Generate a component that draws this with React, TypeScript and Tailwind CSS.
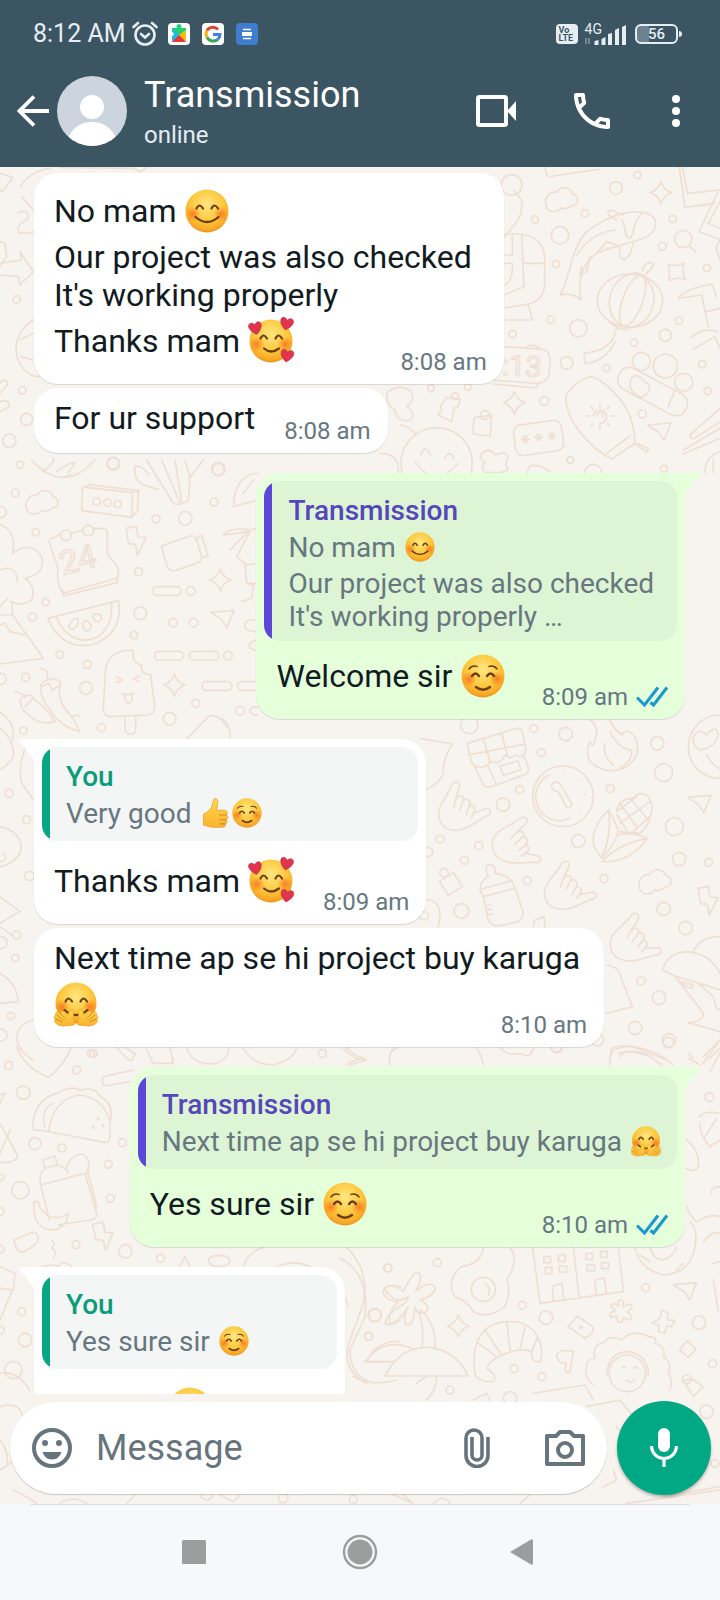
import { memo } from "react";
import type { ReactNode } from "react";
import { MdOutlinePhone } from "react-icons/md";

type EmojiKind = "blush" | "relaxed" | "hearts" | "hug" | "thumb";

type Line = {
  text: string;
  emojis?: EmojiKind[];
};

type Quote = {
  author: string;
  lines: Line[];
};

type Message = {
  id: number;
  outgoing?: boolean;
  first?: boolean;
  quote?: Quote;
  lines: Line[];
  time?: string;
};

const MESSAGES: Message[] = [
  {
    id: 1,
    lines: [
      { text: "No mam ", emojis: ["blush"] },
      { text: "Our project was also checked " },
      { text: "It's working properly " },
      { text: "Thanks mam ", emojis: ["hearts"] },
    ],
    time: "8:08 am",
  },
  { id: 2, lines: [{ text: "For ur support" }], time: "8:08 am" },
  {
    id: 3,
    outgoing: true,
    first: true,
    quote: {
      author: "Transmission",
      lines: [
        { text: "No mam ", emojis: ["blush"] },
        { text: "Our project was also checked " },
        { text: "It's working properly …" },
      ],
    },
    lines: [{ text: "Welcome sir ", emojis: ["relaxed"] }],
    time: "8:09 am",
  },
  {
    id: 4,
    first: true,
    quote: {
      author: "You",
      lines: [{ text: "Very good ", emojis: ["thumb", "relaxed"] }],
    },
    lines: [{ text: "Thanks mam ", emojis: ["hearts"] }],
    time: "8:09 am",
  },
  {
    id: 5,
    lines: [
      { text: "Next time ap se hi project buy karuga" },
      { text: "", emojis: ["hug"] },
    ],
    time: "8:10 am",
  },
  {
    id: 6,
    outgoing: true,
    first: true,
    quote: {
      author: "Transmission",
      lines: [{ text: "Next time ap se hi project buy karuga ", emojis: ["hug"] }],
    },
    lines: [{ text: "Yes sure sir ", emojis: ["relaxed"] }],
    time: "8:10 am",
  },
  {
    id: 7,
    first: true,
    quote: {
      author: "You",
      lines: [{ text: "Yes sure sir ", emojis: ["relaxed"] }],
    },
    lines: [{ text: "", emojis: ["relaxed"] }],
  },
];

const EMOJI_LABELS: Record<EmojiKind, string> = {
  blush: "smiling face with smiling eyes",
  relaxed: "smiling face",
  hearts: "smiling face with hearts",
  hug: "hugging face",
  thumb: "thumbs up",
};

const HEART = "M0 5C-7 0-6-5-3-5-1-5 0-3 0-3 0-3 1-5 3-5 6-5 7 0 0 5Z";

/* Shared gradients for the emoji faces */
const EmojiDefs = () => (
  <svg className="absolute h-0 w-0" aria-hidden="true">
    <defs>
      <radialGradient id="face" cx="0.5" cy="0.35" r="0.68">
        <stop offset="0" stopColor="#ffe682" />
        <stop offset="0.55" stopColor="#fdc93e" />
        <stop offset="0.85" stopColor="#f9a926" />
        <stop offset="1" stopColor="#e8881c" />
      </radialGradient>
      <radialGradient id="cheek">
        <stop offset="0" stopColor="#f4661b" stopOpacity="0.75" />
        <stop offset="1" stopColor="#f4661b" stopOpacity="0" />
      </radialGradient>
      <linearGradient id="hand" x1="0" y1="0" x2="0" y2="1">
        <stop offset="0" stopColor="#ffd84f" />
        <stop offset="1" stopColor="#f9b32c" />
      </linearGradient>
    </defs>
  </svg>
);

const Emoji = ({ kind, className }: { kind: EmojiKind; className: string }) => {
  if (kind === "thumb") {
    return (
      <svg viewBox="0 0 44 44" className={className} role="img" aria-label={EMOJI_LABELS[kind]}>
        <path
          d="M5 24C10 22 15 17 18 11 19 8 19 3 21 1c4-1 6 3 5 8l-2 9h12c5 0 5 6 2 7 4 1 3 6 0 7 3 2 1 6-1 6 1 3-1 5-4 5H20C13 43 9 40 5 40Z"
          fill="url(#hand)"
          stroke="#e59a22"
        />
        <path d="M39 25H29M39 32H29M37 38H29" stroke="#d98a1c" strokeWidth="1.6" fill="none" strokeLinecap="round" />
      </svg>
    );
  }
  const hugging = kind === "hug";
  return (
    <svg viewBox="0 0 44 44" className={`overflow-visible ${className}`} role="img" aria-label={EMOJI_LABELS[kind]}>
      <circle cx="22" cy={hugging ? 21 : 22} r={hugging ? 20.5 : 21.5} fill="url(#face)" />
      <circle cx="8" cy="25" r="7.5" fill="url(#cheek)" />
      <circle cx="36" cy="25" r="7.5" fill="url(#cheek)" />
      <g fill="none" stroke="#6b3f0c" strokeLinecap="round">
        {kind === "relaxed" ? (
          <>
            <path d="M11 22q3.5-5 7 0M26 22q3.5-5 7 0" strokeWidth="2.4" />
            <path d="M8 15q3-4 8-2.5M28 12.5q5-1.5 8 2.5" strokeWidth="1.5" />
            <path d="M15 33q7 5.500 14 0" strokeWidth="2.4" />
          </>
        ) : (
          <>
            <path d="M11.5 19.5q3-6 6.500 0M26.5 19.5q3-6 6.500 0" strokeWidth="2.2" />
            <path d={kind === "hearts" ? "M15 29.5q7 6 15 0" : "M10.5 28q11.500 10 23 0"} strokeWidth="2.2" />
          </>
        )}
      </g>
      {kind === "hearts" && (
        <g fill="#e2344c" stroke="#b81f3a" strokeWidth="0.5">
          <path d={HEART} transform="translate(6.5 9.5) rotate(-12) scale(1.2)" />
          <path d={HEART} transform="translate(37.5 5) rotate(12) scale(1.2)" />
          <path d={HEART} transform="translate(38 37) rotate(10) scale(1.2)" />
        </g>
      )}
      {hugging && (
        <>
          <g fill="url(#hand)" stroke="#eda02a" strokeWidth="0.8" strokeLinejoin="round">
            <path d="M20 43c1-3-2-7 0-14-1-3-4-2-5 1l-1 3-5-4c-2 0-3 1-2 3l-4-2c-2 1-2 2-1 3-2 1-2 2-1 4-1 2 0 6 8 7Z" />
            <path d="M24 43c-1-3 2-7 0-14 1-3 4-2 5 1l1 3 5-4c2 0 3 1 2 3l4-2c2 1 2 2 1 3 2 1 2 2 1 4 1 2 0 6-8 7Z" />
          </g>
          <path
            d="M7 32l4 4M3 33l6 5M2 37l6 3M37 32l-4 4M41 33l-6 5M42 37l-6 3"
            fill="none"
            stroke="#c97a18"
            strokeWidth="0.8"
            strokeLinecap="round"
          />
        </>
      )}
    </svg>
  );
};

const STAR = "M0-33Q7-8 33 0 8 8 0 33-8 8-33 0-8-8 0-33Z";
const CLOUD = "M-46 22C-56-4-35-24-14-21-4-42 30-36 32-16 56-10 52 20 30 18 20 28 6 30 0 24-8 40-40 42-46 22Z";
const PLANE = "M-35-18 35-24 14 28-2 4Z";
const BOLT = "M-28-40 4-46 8-14 32-12 6 40 0 8-20 6Z";
const FIST =
  "M-10-60C0-85 22-78 16-58L-2-20C10-40 28-34 22-18 38-26 46-10 38 2 54-2 58 12 48 24L88 16C104 20 100 36 86 38 60 44 30 72-10 68-56 64-66 20-48-10ZM-2-20-8 0M22-18 8 10M38 2 26 24M48 24 40 36";

type Dot = [number, number, number];

const Dots = ({ items }: { items: Dot[] }) => (
  <>
    {items.map(([x, y, r]) => (
      <circle key={`${x}-${y}`} cx={x} cy={y} r={r} />
    ))}
  </>
);

const Stamp = ({ d, x, y, turn = 0 }: { d: string; x: number; y: number; turn?: number }) => (
  <path d={d} transform={`translate(${x} ${y}) rotate(${turn})`} />
);

/* Line-drawn doodles behind the conversation */
const Wallpaper = memo(() => (
  <svg
    className="absolute inset-0 h-full w-full"
    viewBox="0 0 720 1600"
    preserveAspectRatio="xMidYMin slice"
    fill="none"
    stroke="#efdfd3"
    strokeWidth="5"
    strokeLinejoin="round"
    strokeLinecap="round"
    aria-hidden="true"
  >
    {/* top left */}
    <g transform="translate(0 160) scale(0.3333)">
      <Dots
        items={[
          [50, 418, 11], [67, 691, 11], [80, 778, 18], [28, 842, 20], [340, 910, 18], [655, 928, 18], [60, 914, 11],
        ]}
      />
      <path d="M0 40 38 52 8 95 0 90M60 80C80 50 110 30 150 25M65 110 100 150M55 160C80 145 90 165 80 180 60 190 45 205 60 220 75 210 90 230 100 215M0 245 15 250 20 290 0 320M0 310 65 300 60 275 100 335 60 375 55 350 0 345" />
      <path d="M100 480C50 510 35 570 60 610 75 640 100 650 120 650M60 540 100 520M62 590 100 600M0 700 22 675Q25 660 10 660L0 668M0 755 28 740Q30 728 15 722L0 725M180 22 400 25 420 35 440 22" />
    </g>

    {/* top right */}
    <g transform="translate(380 160) scale(0.3333)">
      <Dots
        items={[
          [772, 45, 11], [708, 84, 19], [615, 160, 11], [465, 178, 11], [540, 226, 26], [878, 177, 11],
          [910, 237, 26], [847, 259, 12], [527, 312, 11], [981, 324, 11], [512, 479, 11], [398, 522, 11],
          [595, 505, 26], [762, 548, 11], [856, 526, 18], [897, 482, 11], [560, 609, 19], [680, 624, 11],
          [784, 604, 27], [856, 618, 36], [911, 667, 27], [967, 613, 11], [983, 693, 11], [493, 723, 13],
          [787, 762, 12], [153, 685, 10], [263, 681, 10], [571, 900, 10], [640, 938, 25], [852, 926, 10],
          [395, 75, 31], [225, 708, 10], [314, 765, 13],
        ]}
      />
      <Stamp d={STAR} x={843} y={98} />
      <Stamp d={STAR} x={403} y={728} />
      <Stamp d={CLOUD} x={545} y={118} />
      <Stamp d={PLANE} x={838} y={813} />
      <path d="M928 258 946 275M495 22 500 45Q505 52 520 48L655 28M865 312Q888 322 912 310 905 335 915 358 890 350 866 362 872 335 865 312ZM370 235C395 200 432 180 425 120L400 90" />
      <path d="M540 405C570 360 570 270 620 215 680 170 740 150 790 157 840 165 840 215 790 235 740 255 690 260 650 280 610 310 590 350 603 420 580 400 560 400 540 405ZM730 165C715 160 695 145 684 155 680 168 700 175 710 180M720 262C715 290 725 300 735 298 755 285 755 265 760 250M725 180C740 200 730 230 750 235 765 220 755 190 785 160M590 285C620 240 660 215 705 210M605 320 600 345 620 335 630 290M650 280 680 245 710 255" />
      <ellipse cx="750" cy="422" rx="98" ry="80" />
      <ellipse cx="755" cy="422" rx="66" ry="80" transform="rotate(14 755 422)" />
      <ellipse cx="758" cy="422" rx="30" ry="80" transform="rotate(20 758 422)" />
      <path d="M755 342Q780 332 805 362M787 333C790 310 815 298 820 315 820 328 802 330 797 346M692 488Q715 512 745 508M710 508 700 535C670 580 630 575 612 580L615 612C660 605 690 580 705 545" />
      <path d="M370 222H420Q490 230 494 290V375Q490 430 430 435L370 444M432 310H494M397 222V285H370M425 225 432 380 370 406M370 310H397Q400 370 370 376M445 435 458 480H370" />
      <path d="M440 560Q460 548 480 566M370 560 490 568Q515 580 510 610L505 650Q495 672 470 670L330 660M340 672 470 684 475 672" />
      <text x="365" y="645" fontSize="86" strokeWidth="4" fontFamily="Roboto, sans-serif" transform="rotate(3 365 645)">
        :13
      </text>
      <path d="M625 652C600 660 560 690 557 715 560 790 640 870 695 897L765 850C765 760 720 700 650 655Q635 648 625 652ZM680 880 750 828M765 850 800 876 806 866 775 852M640 768A20 20 0 1 1 660 790M652 768A9 9 0 1 1 668 772M660 730V742M660 795V808M618 768H630M692 768H704M630 738 640 748M690 798 682 790M690 738 682 746M632 798 640 790" />
      <rect x="705" y="660" width="226" height="70" rx="32" transform="rotate(28 818 695)" />
      <path d="M755 655C740 680 755 700 785 712 815 700 815 670 795 668 780 640 760 645 755 655ZM885 690 865 740" />
      <rect x="403" y="788" width="145" height="92" rx="22" transform="rotate(-8 475 833)" />
      <path d="M424 838H448M430 828 442 848M442 828 430 848M464 832H488M470 822 482 842M482 822 470 842M504 827H528M510 817 522 837M522 817 510 837" />
      <circle cx="170" cy="910" r="107" />
      <path d="M122 885Q135 850 152 885M194 895Q208 865 223 898M105 905Q165 990 235 910M0 880Q60 880 55 940M60 795Q90 800 105 820M20 700Q50 670 90 690 110 720 80 740 110 760 90 780 50 790 45 750 20 740 20 700Z" />
      <path d="M180 740 200 712 240 718 235 740 222 745 215 785 195 775 175 765 185 745ZM283 772 335 767 330 828 278 822ZM305 880Q330 860 345 885 380 870 385 895 370 910 385 930L360 938H315Q300 920 315 905 295 900 305 880ZM440 938 450 918Q480 910 510 935" />
      <path d="M898 22 915 142 1005 130M908 22 922 100 1020 90M1012 100 957 215 1020 238M1020 125 985 190 1020 205M1020 240 1008 262 1020 300M895 415C920 385 960 380 995 372L1010 410M895 415 965 405 985 500M980 455 1020 445M930 535Q970 500 1010 515M940 568 1005 530 1020 565M1020 745 930 825Q930 838 945 835L1020 785M910 870 1020 805M910 882 1020 835M975 938Q975 890 1020 875M1000 938V900" />
    </g>

    {/* left, beside the first reply */}
    <g transform="translate(0 460) scale(0.3333)">
      <Dots
        items={[
          [340, 12, 19], [655, 27, 20], [46, 99, 12], [642, 126, 12], [468, 177, 12], [556, 175, 20],
          [107, 217, 11], [416, 335, 12], [572, 393, 13], [137, 426, 11], [97, 471, 12], [421, 460, 19],
          [519, 488, 13], [581, 488, 13], [402, 525, 11], [179, 584, 11], [262, 613, 12], [684, 587, 13],
          [77, 652, 12], [258, 684, 19], [587, 730, 12], [720, 752, 13], [509, 776, 19], [304, 803, 12],
          [70, 812, 11], [290, 125, 11], [322, 128, 11], [353, 132, 11], [2, 156, 17], [2, 657, 17], [265, 212, 16], [198, 226, 16],
        ]}
      />
      <Stamp d={CLOUD} x={126} y={126} />
      <Stamp d={STAR} x={661} y={360} />
      <Stamp d={STAR} x={523} y={675} />
      <Stamp d={PLANE} x={667} y={475} />
      <Stamp d={BOLT} x={406} y={245} />
      <path d="M247 88Q248 80 258 82L398 98 395 172 245 152ZM250 85 268 74 415 92 413 152 395 172M398 98 415 92M95 0Q190 105 285 0M125 25Q170 65 215 45M130 35Q170 0 160-5M170 35Q200 10 225 8L205 40" />
      <path d="M405 20Q400 60 430 75L475 88M405 20Q430 15 445 45M440 0 520 130Q535 138 565 122L570 50 555 0M485 0 540 130M525 0 545 125M610 0 568 55M700 140C700 80 730 40 775 40M700 140 775 120M730 100 760 60" />
      <path d="M150 238 182 222M214 220 250 210M282 206 310 205Q322 205 322 220L322 280Q325 290 350 315 360 340 352 355L190 400Q175 385 172 345 178 320 165 300L148 245M352 355V368L190 408V390" />
      <text x="188" y="345" fontSize="98" strokeWidth="4" fontFamily="Roboto, sans-serif" transform="rotate(-14 188 345)">
        24
      </text>
      <path d="M485 258 570 228Q585 224 590 240L605 290Q605 305 590 310L525 332Q505 335 500 315ZM585 240 605 225 625 290 605 290M0 195Q50 210 38 280 90 240 125 290 140 340 75 355 110 380 95 420 70 440 30 425M0 330Q50 310 52 365M0 440 25 412M35 425 38 465M0 465H38L130 595 0 612M0 495 15 490 30 515 75 525" />
      <path d="M143 475 355 422Q372 510 290 550 190 580 143 475ZM168 470Q210 560 285 535 340 505 335 430M205 500Q225 465 235 480 235 505 215 508ZM248 490Q260 470 275 500 265 520 252 508ZM278 465Q300 455 305 475 295 492 282 480Z" />
      <rect x="457" y="380" width="86" height="26" rx="13" />
      <rect x="463" y="574" width="88" height="26" rx="13" />
      <rect x="568" y="574" width="88" height="26" rx="13" />
      <rect x="606" y="665" width="90" height="26" rx="13" />
      <rect x="712" y="665" width="90" height="26" rx="13" />
      <path d="M775 480H750Q732 485 734 502 740 515 775 515M775 538Q745 545 748 560 755 572 775 572M775 740Q750 740 750 753 755 766 775 766M670 225Q690 200 750 210L770 205M670 225 745 215 690 270M750 215 710 290 740 315 775 310M735 315 740 370 760 375 755 415 725 425M740 370H775" />
      <path d="M400 572Q360 568 335 590 315 610 315 650L310 750Q312 768 330 770L445 765Q465 760 464 740L452 645Q420 640 425 615 395 610 400 572ZM375 770V810Q380 823 392 823 405 823 407 810V770M348 650 368 660 350 668M418 648 400 658 418 664M365 700Q385 708 402 700M372 705Q375 728 388 730 398 725 397 705" />
      <path d="M45 695Q70 700 75 712M62 730Q55 715 75 708 95 700 100 715 140 745 165 785 120 800 80 760 65 750 62 730ZM75 740 100 715M120 625Q145 625 143 655M122 690Q120 660 150 658 180 655 182 672 165 720 215 770L240 815Q180 800 150 750 125 720 122 690ZM125 680 145 670 158 690 180 675M215 770Q235 760 237 770M0 757Q50 790 38 840M560 838 625 770Q640 760 660 775L690 810V838M660 775Q680 780 685 800" />
    </g>

    {/* right of the second exchange */}
    <g transform="translate(420 720) scale(0.3333)">
      <Dots
        items={[
          [341, 26, 12], [437, 42, 20], [364, 98, 12], [712, 70, 20], [731, 158, 27], [299, 209, 12],
          [571, 206, 12], [249, 254, 20], [763, 320, 27], [475, 363, 20], [60, 357, 12], [176, 377, 12],
          [777, 417, 20], [866, 427, 12], [133, 421, 12], [322, 482, 12], [552, 476, 12], [731, 567, 20],
          [797, 624, 20], [124, 573, 22], [663, 783, 12], [717, 833, 20], [646, 924, 20], [747, 961, 20],
          [532, 960, 18], [410, 980, 18], [72, 458, 13], [12, 587, 13], [24, 396, 14], [429, 229, 91], [900, 80, 95], [148, 15, 26],
        ]}
      />
      <Stamp d={CLOUD} x={705} y={484} turn={-3} />
      <Stamp d={PLANE} x={838} y={250} />
      <Stamp d={BOLT} x={862} y={545} />
      <Stamp d={FIST} x={110} y={262} turn={-8} />
      <Stamp d={FIST} x={280} y={360} turn={22} />
      <Stamp d={FIST} x={430} y={500} />
      <Stamp d={FIST} x={630} y={655} turn={8} />
      <path d="M142 70 290 25Q303 22 308 38L318 90Q310 118 285 105 270 120 255 105 245 135 210 125 200 145 175 140 155 140 152 115ZM190 55 210 125M245 40 262 105M145 105 315 72M165 142 190 195Q200 205 215 200L320 162Q328 155 325 140L310 105M240 138 295 122 302 150 250 166ZM205 140 230 195" />
      <path d="M388 165A72 72 0 1 0 450 295M395 195Q405 180 420 190L455 250Q455 268 440 262L415 215Q395 215 395 195ZM435 158V160M475 180V182M495 222V224M480 270V272" />
      <path d="M510 0Q540 20 525 60 520 90 510 65 495 90 510 125 560 170 620 140 670 105 645 50 620 20 605 45 575 20 570 0M555 70Q545 105 580 135M570 35Q600 90 635 90 640 120 600 145M0 55 98 72Q70 110 70 160 55 200 0 215" />
      <path d="M590 270Q600 235 640 235 660 210 685 230 705 260 690 290 685 320 660 340L600 335M600 250 650 320M630 235 685 300M590 285 620 330M690 245 600 310M650 230 590 275M695 285 640 335M567 270Q510 320 522 380L545 415Q590 370 595 330ZM567 270Q575 350 545 415M595 345Q640 335 682 355 630 430 545 425M550 420Q600 370 682 355" />
      <path d="M180 510Q180 480 205 470 190 440 208 433 228 435 225 460 270 465 280 495L285 505 190 530ZM183 508 278 480M190 530 205 600Q215 618 235 618L295 605Q312 595 308 570L285 505M195 555H210M198 570 215 568M202 585 218 582M340 620 345 600 372 590 375 620M58 485 100 458 128 500 85 526ZM0 540Q60 530 60 590L55 620M560 735Q600 740 605 780L638 860 560 880" />
      <path d="M728 750Q740 700 800 695 870 700 900 760M728 750 765 768 850 880Q850 905 805 908L900 935M765 768 900 810M785 785 820 795 815 805 790 795ZM820 695Q840 650 900 650M835 790 880 830 890 865 900 870M570 1020 575 985Q610 970 650 985L740 1020M595 1000Q650 985 690 1010M850 1010 900 960M870 1015 900 985M805 1000 820 1015M820 50Q840 20 860 45 890 10 895 45 890 80 840 90 815 75 820 50ZM860 105Q880 140 900 145" />
    </g>

    {/* left margin */}
    <g transform="translate(0 720) scale(0.3333)">
      <Dots
        items={[
          [27, 220, 12], [80, 299, 12], [88, 468, 14], [50, 645, 12], [46, 714, 11], [3, 668, 18],
          [33, 888, 11], [3, 945, 18], [273, 1000, 11],
        ]}
      />
      <path d="M0 25Q45 60 40 110 20 140 0 150M90 60Q50 120 65 190L100 240M0 320Q50 330 62 370 70 410 20 435L0 440M10 400Q30 420 0 425M0 530 60 575 0 610M0 620 40 650M0 760Q50 790 55 845L0 850M100 900Q50 910 50 960 60 1000 100 1020" />
    </g>

    {/* left, below */}
    <g transform="translate(0 1040) scale(0.3333)">
      <Dots
        items={[
          [280, 41, 11], [26, 77, 12], [230, 90, 12], [967, 41, 12], [70, 158, 20], [105, 311, 18], [367, 308, 12],
          [186, 324, 12], [325, 373, 12], [61, 451, 26], [331, 475, 12], [228, 614, 12], [376, 634, 20],
          [482, 655, 12], [65, 815, 12], [75, 900, 20], [40, 990, 26], [1163, 684, 12], [1125, 826, 19],
          [1106, 889, 12], [0, 628, 12], [0, 870, 12], [0, 515, 12], [2, 412, 10],
        ]}
      />
      <path d="M50 20Q70 80 145 112 190 80 215 20M350 22Q380 60 395 62L405 40 370 20M440 30 460 70H520L510 20M310 110 400 90M310 110Q300 125 315 138L390 125M560 25Q580 80 650 70 690 50 685 25M730 25Q760 75 820 75 880 60 890 25M1030 25Q1060 60 1100 60L1050 75" />
      <path d="M98 262Q100 180 170 160 215 135 240 150 290 140 295 165 345 190 330 245L330 290Q330 308 315 307L120 270Q98 275 98 262ZM145 275Q160 180 235 165 310 170 330 245M135 260Q120 210 160 190M0 165 15 160 0 190M0 250 52 345Q50 370 0 368M0 340 30 270" />
      <path d="M280 262V264M295 235V237M310 255V257" strokeWidth="9" />
      <path d="M128 360 165 348 172 375 135 385ZM135 385Q115 400 122 435L148 540M172 375Q200 385 205 400M122 435 255 400 290 520Q290 540 270 540L175 555M200 385Q210 345 245 342 275 350 262 400M262 390 290 500M102 485Q95 570 165 570 200 560 205 520 170 545 135 520 115 500 115 485ZM42 600 95 578Q112 575 115 595 115 615 70 635 50 640 42 600ZM155 602Q170 610 155 625 175 635 160 655" />
      <Stamp d={BOLT} x={308} y={592} turn={-4} />
      <path d="M125 680Q160 670 175 680 185 655 215 680M540 680 555 650 570 680M625 660Q630 645 655 647 690 645 690 665 685 680 655 680 630 680 625 660ZM0 680 45 700 40 750 0 745M35 755 0 840M730 680Q740 640 790 622M1040 622Q1110 690 1090 790 1070 850 1050 900 1020 990 1100 1030M830 680Q900 650 960 700 1030 740 1045 800M1200 740Q1150 730 1150 760 1160 785 1195 785 1160 820 1170 850 1185 855 1200 840M1100 965Q1130 900 1200 905M1100 965H1150M0 1000Q50 990 90 1050" />
    </g>

    {/* right, below */}
    <g transform="translate(340 1040) scale(0.3333)">
      <Dots
        items={[
          [144, 684, 12], [292, 668, 12], [917, 743, 12], [547, 796, 12], [618, 833, 20], [104, 825, 20],
          [1077, 848, 20], [86, 889, 12], [522, 986, 12], [606, 1010, 12], [330, 1050, 12], [1118, 971, 12],
          [430, 748, 36], [862, 1000, 55], [510, 1075, 20], [1040, 1018, 13], [1108, 171, 13], [723, 862, 4], [650, 20, 16], [985, 8, 16],
        ]}
      />
      <Stamp d={STAR} x={355} y={858} />
      <Stamp d={PLANE} x={1035} y={752} />
      <path d="M430 622Q425 670 365 680 315 720 345 770 385 785 400 815 440 840 495 800 515 750 500 720 540 660 510 622M435 730Q455 745 445 765M578 622 600 790 850 755 835 622M700 622 718 775M640 780 637 738 665 730 672 775M768 765 765 720 792 714 800 760" />
      <path d="M612 650H632V668H612ZM655 645H676V664H655ZM616 682H636V702H616ZM658 678H680V696H658ZM738 640H758V658H738ZM782 634H802V652H782ZM742 674H764V692H742ZM785 668H806V686H785Z" />
      <path d="M205 770Q175 790 155 770 120 745 145 738 170 735 190 755 220 690 238 700 250 715 225 755 270 720 285 740 290 765 240 780 275 800 260 815 230 830 225 800 220 870 195 850 190 820 205 800 160 870 135 850 140 820 195 790ZM235 815Q255 870 245 925M240 810Q290 850 285 925M135 1008Q180 920 265 922 350 930 385 1008ZM75 965Q130 890 215 925M75 965H165M260 1080Q290 1050 290 1010M230 1030 260 1008M40 1010Q100 1040 170 1020M0 655Q90 700 75 830L30 930Q30 1010 100 1030" />
      <path d="M405 1000Q395 930 420 890 440 850 500 845 560 840 590 885 615 930 600 965 575 970 575 935 540 920 485 945 450 960 440 985 475 1010 460 1025 410 1025 405 1000ZM415 910 470 950M435 870 485 945M500 845 510 930M555 860 540 928M592 895 575 935" />
      <path d="M650 945Q660 925 700 935L690 995Q680 1005 675 985L680 970Q650 970 650 945ZM685 860 712 828 758 860Q765 880 735 895ZM835 782Q845 775 850 788L850 800 868 792Q880 795 874 806L862 815 875 828Q876 840 864 840L850 832 845 846Q834 850 832 840L832 828 815 832Q806 828 812 818L826 812 814 800Q814 788 826 792L836 798ZM935 850 960 835 965 810 985 820 982 840 1005 842 995 860 980 858 975 880 955 875 958 855ZM1018 930 1042 902 1068 928 1045 952ZM1030 1020 1058 1018 1090 1040 1060 1070Z" />
      <path d="M760 1035Q730 1010 740 980 735 960 765 955 755 910 790 910 810 880 845 900 880 865 925 890 955 890 945 910 980 920 970 950 1000 970 985 1000 1000 1020 990 1050M800 1005Q805 935 865 935 925 945 925 1005M845 985Q850 975 858 985M880 985Q887 978 893 985M858 1020Q875 1035 885 1018M1080 230Q1090 210 1140 220M1080 250Q1080 290 1110 320L1140 300M1095 290 1130 235M1040 300Q1080 330 1075 380 1060 400 1040 385M1115 460Q1110 440 1140 440M1040 500Q1050 530 1070 545 1110 520 1140 530M885 622Q900 690 970 705 1060 700 1068 600 1070 565 1050 545M930 622Q940 660 970 660 1000 650 1010 622M900 645 930 665M1010 690 1030 670M1090 605Q1120 570 1140 580M1120 670 1140 665M1120 720 1135 815M580 1060 735 1035 760 1080M400 1080 440 1060 450 1080M810 75Q800 15 880 20 950 30 1000 75M840 50Q850 20 930 50L965 75M1045 55 1080 75M1140 0 1090 70M1140 40 1110 95M150 75Q140 30 175 22M410 22Q425 50 430 75M480 22Q500 50 540 40 570 60 580 25M20 22Q40 50 75 55 35 60 20 75" />
    </g>

    {/* around the composer */}
    <g transform="translate(0 1380) scale(0.3333)">
      <path d="M0 80Q70 60 70 130M0 270 60 230M40 330 70 345 110 370M0 180Q30 220 20 260M180 370Q220 345 260 370M380 370 410 340M600 345Q620 375 640 345M660 345 700 365 720 345M1180 345 1240 370 1210 345M1300 370Q1330 340 1350 370M1560 370 1590 345M1840 270 1850 300 1810 320M1880 370 2160 330M1990 350 2160 320M1760 80 1860 60 1900 110M1850 140 1890 190" />
      <Dots items={[[2120, 95, 20], [850, 355, 14], [1060, 358, 12], [2145, 250, 12]]} />
    </g>
  </svg>
));

Wallpaper.displayName = "Wallpaper";

const StatusBar = () => (
  <div className="flex h-[58px] items-center justify-between pt-[10px] pr-[38px] pl-[33px] text-[#e6eef3]">
    <div className="flex items-center">
      <span className="text-[25px] leading-7">8:12 AM</span>
      <svg
        viewBox="0 0 26 26"
        className="ml-[6px] h-[26px] w-[26px]"
        fill="none"
        stroke="currentColor"
        strokeWidth="2.6"
        strokeLinecap="round"
        aria-hidden="true"
      >
        <circle cx="13" cy="14" r="9.5" />
        <path d="M9 13l4 3.5 4-3.5M1.5 6 6 2M24.5 6 20 2" />
      </svg>
      <div className="ml-[10px] flex gap-3">
        <svg viewBox="0 0 22 22" className="h-[22px] w-[22px]" aria-hidden="true">
          <rect width="22" height="22" rx="4" fill="#fff" />
          <path d="M4 5h5a2.5 2.5 0 1 1 4 0h5v12H4v-4a2 2 0 1 0 0-4Z" fill="#22d07a" />
          <path d="M4 6 11 12 4 19v-6a2 2 0 1 0 0-4Z" fill="#1fb6f0" />
          <path d="M18 7v12l-7-7Z" fill="#fbbc0b" />
          <path d="M4 19 11 12l7 7Z" fill="#e93636" />
        </svg>
        <svg viewBox="0 0 22 22" className="h-[22px] w-[22px]" fill="none" strokeWidth="3" aria-hidden="true">
          <rect width="22" height="22" rx="4" fill="#fff" />
          <path d="M16 6.5A7 7 0 0 0 5 7.5" stroke="#d9473c" />
          <path d="M5 7.5A7 7 0 0 0 5 14.5" stroke="#efb412" />
          <path d="M5 14.5A7 7 0 0 0 15.5 16.5" stroke="#35a455" />
          <path d="M11 11.5H18Q18 14.5 15.5 16.5" stroke="#4580e8" />
        </svg>
        <svg viewBox="0 0 22 22" className="h-[22px] w-[22px]" aria-hidden="true">
          <rect width="22" height="22" rx="4" fill="#3f7dd0" />
          <path d="M7 6.5h8M7 15.5h8" stroke="#fff" strokeWidth="1.6" />
          <path d="M6 11h10" stroke="#fff" strokeWidth="4" />
        </svg>
      </div>
    </div>
    <div className="flex items-center">
      <span className="flex h-5 w-[22px] flex-col justify-center rounded bg-[#e6eef3] pl-[3px] text-[9px] leading-[8px] font-bold text-[#3b5563]">
        <span>Vo</span>
        <span>LTE</span>
      </span>
      <span className="ml-[7px] self-start text-sm leading-3">4G</span>
      <svg viewBox="0 0 42 22" className="-ml-[18px] h-[22px] w-[42px]" aria-hidden="true">
        <path d="M2 21v-6M5 15v6" stroke="#8299a5" strokeWidth="1.5" />
        <path
          d="M10.5 22v-4l4-1v5ZM17.5 22v-6l4-2v8ZM24 22V11l4-1v12ZM31 22V7l4-2v17ZM38 22V4l4-2v20Z"
          fill="currentColor"
        />
      </svg>
      <span className="ml-[9px] flex h-5 w-[43px] items-center justify-center rounded-md border-2 border-current bg-linear-to-r from-[#6d828e] from-30% to-transparent to-30% text-[15px] leading-4 font-medium">
        56
      </span>
      <span className="ml-px h-[6px] w-[3px] rounded-r-sm bg-current" />
    </div>
  </div>
);

const ChatHeader = () => (
  <header className="relative shrink-0 bg-[#3b5563] pb-[3px] text-white">
    <StatusBar />
    <div className="flex h-[106px] items-center pr-8 pl-[17px]">
      <button type="button" aria-label="Back" className="shrink-0">
        <svg viewBox="0 0 32 32" className="h-8 w-8" fill="none" stroke="currentColor" strokeWidth="3.8">
          <path d="M32 16H3M17 1.5 2.5 16 17 30.5" />
        </svg>
      </button>
      <svg
        viewBox="0 0 70 70"
        className="ml-2 h-[70px] w-[70px] shrink-0 rounded-full bg-[#ccd5de]"
        fill="#fff"
        role="img"
        aria-label="Contact photo"
      >
        <circle cx="35" cy="31" r="12" />
        <path d="M10 64C16 50 25 46 35 46s19 4 25 18L50 70H20Z" />
      </svg>
      <div className="ml-[17px] flex min-w-0 flex-1 flex-col gap-[5px]">
        <h1 className="truncate text-4xl leading-[42px]">Transmission</h1>
        <p className="text-2xl leading-7 text-[#e4edf2]">online</p>
      </div>
      <div className="flex items-center gap-12">
        <button type="button" aria-label="Video call">
          <svg viewBox="0 0 48 48" className="h-12 w-12" fill="none" stroke="currentColor" strokeWidth="4">
            <rect x="6" y="10" width="28" height="28" rx="1.5" />
            <path d="M35 24 44 14v20Z" fill="currentColor" stroke="none" />
          </svg>
        </button>
        <button type="button" aria-label="Voice call">
          <MdOutlinePhone className="h-12 w-12" />
        </button>
        <button type="button" aria-label="More options">
          <svg viewBox="0 0 24 32" className="h-8 w-6" fill="currentColor">
            <circle cx="12" cy="4" r="4" />
            <circle cx="12" cy="16" r="4" />
            <circle cx="12" cy="28" r="4" />
          </svg>
        </button>
      </div>
    </div>
  </header>
);

const QuoteBox = ({ quote, outgoing }: { quote: Quote; outgoing?: boolean }) => (
  <div className={`mx-2 flex overflow-hidden rounded-2xl ${outgoing ? "bg-[#ddf5d4]" : "bg-[#f4f6f6]"}`}>
    <div className={`w-2 shrink-0 ${outgoing ? "bg-[#5c47d9]" : "bg-[#06a884]"}`} />
    <div className="pt-[13px] pr-4 pb-2 pl-4 text-[28px] leading-[33px] whitespace-pre text-[#667781]">
      <p className={`font-medium ${outgoing ? "text-[#5546bb]" : "text-[#0b9c7c]"}`}>{quote.author}</p>
      {quote.lines.map((line) => (
        <p key={line.text} className={line.emojis ? "flex h-10 items-center gap-[2px]" : ""}>
          {line.text}
          {line.emojis?.map((kind) => (
            <Emoji key={kind} kind={kind} className="h-[30px] w-[30px]" />
          ))}
        </p>
      ))}
    </div>
  </div>
);

const Ticks = () => (
  <svg viewBox="0 0 32 22" className="h-[22px] w-8" fill="none" stroke="#1b97cf" strokeWidth="3" role="img" aria-label="Read">
    <path d="M1 11.5 8.5 19 22 1.5M14.5 16.5 17.5 19 31 1.5" />
  </svg>
);

const MessageLine = ({ line, children }: { line: Line; children?: ReactNode }) => (
  <div className="flex items-end">
    <p className={line.emojis ? "flex h-[54px] items-center gap-px" : "pr-[7px]"}>
      {line.text}
      {line.emojis?.map((kind) => (
        <Emoji key={kind} kind={kind} className="h-11 w-11" />
      ))}
    </p>
    {children}
  </div>
);

const Bubble = ({ message }: { message: Message }) => {
  const { outgoing, first, quote, lines, time } = message;
  const quoteGap = outgoing ? "pt-2" : "pt-[13px]";
  const corner = outgoing ? "rounded-tr-none" : "rounded-tl-none";

  return (
    <li
      className={`relative w-fit rounded-3xl pb-4 shadow-[0_1px_1px_rgba(11,20,26,0.12)] ${
        outgoing ? "self-end bg-[#e5ffdb]" : "bg-white"
      } ${first ? `mt-5 pt-2 ${corner}` : "mt-1 pt-[11px]"} ${time ? "" : "min-w-[311px]"}`}
    >
      {first && (
        <svg
          viewBox="0 0 16 21"
          className={`absolute top-0 h-[21px] w-4 ${outgoing ? "left-full" : "right-full -scale-x-100"}`}
          fill={outgoing ? "#e5ffdb" : "#fff"}
          aria-hidden="true"
        >
          <path d="M0 0H13Q16 0 14 3L0 21Z" />
        </svg>
      )}
      {quote && <QuoteBox quote={quote} outgoing={outgoing} />}
      <div
        className={`pr-[17px] text-[32px] leading-[38px] whitespace-pre text-[#111b21] ${
          time ? "pl-5" : "pl-[134px]"
        } ${quote ? quoteGap : ""}`}
      >
        {lines.map((line, index) => (
          <MessageLine key={line.text} line={line}>
            {time && index === lines.length - 1 && (
              <span className="-mb-2 ml-auto flex items-center gap-2 pl-[22px] text-2xl leading-7 text-[#667781]">
                <time className={line.emojis ? "pl-2" : ""}>{time}</time>
                {outgoing && <Ticks />}
              </span>
            )}
          </MessageLine>
        ))}
      </div>
    </li>
  );
};

const Composer = () => (
  <form className="relative flex shrink-0 items-center gap-[10px] pt-[7px] pr-[9px] pb-[9px] pl-[10px]">
    <div className="flex h-[92px] min-w-0 flex-1 items-center rounded-full bg-white px-[22px] text-[#65747d] shadow-[0_1px_1px_rgba(11,20,26,0.2)]">
      <button type="button" aria-label="Emoji" className="shrink-0">
        <svg viewBox="0 0 40 40" className="h-10 w-10">
          <circle cx="20" cy="20" r="18" fill="none" stroke="currentColor" strokeWidth="4" />
          <circle cx="13" cy="15" r="3" fill="currentColor" />
          <circle cx="27" cy="15" r="3" fill="currentColor" />
          <path d="M10.5 24h19Q27 31.5 20 31.5T10.5 24Z" fill="currentColor" />
        </svg>
      </button>
      <input
        type="text"
        aria-label="Message"
        placeholder="Message"
        className="ml-6 h-16 min-w-0 flex-1 bg-transparent text-4xl text-[#111b21] outline-none placeholder:text-[#65747d]"
      />
      <button type="button" aria-label="Attach" className="shrink-0">
        <svg viewBox="0 0 26 40" className="h-10 w-[26px]" fill="none" stroke="currentColor" strokeWidth="3.6">
          <path d="M24 9v18.5a11 11 0 0 1-22 0V10a8 8 0 0 1 16 0v17a5 5 0 0 1-10 0V9" />
        </svg>
      </button>
      <button type="button" aria-label="Camera" className="ml-[55px] shrink-0">
        <svg
          viewBox="0 0 40 40"
          className="h-10 w-10"
          fill="none"
          stroke="currentColor"
          strokeWidth="4"
          strokeLinejoin="round"
        >
          <path d="M2 8h9l4-4h10l4 4h9v28H2Z" />
          <circle cx="20" cy="22" r="7" />
        </svg>
      </button>
    </div>
    <button
      type="button"
      aria-label="Record voice message"
      className="flex h-[94px] w-[94px] shrink-0 items-center justify-center rounded-full bg-[#02a884] text-white shadow-[0_2px_3px_rgba(11,20,26,0.3)]"
    >
      <svg viewBox="0 0 28 40" className="h-10 w-7" fill="none" stroke="currentColor" strokeWidth="3.2">
        <rect x="8" y="0" width="12" height="24" rx="6" fill="currentColor" stroke="none" />
        <path d="M1.6 18a12.400 12.400 0 0 0 24.800 0M14 30.5v8.500" />
      </svg>
    </button>
  </form>
);

const NavigationBar = () => (
  <nav className="relative h-24 shrink-0 bg-[#f7f8fa] text-[#9c9d9d]" aria-label="System">
    <div className="mx-[30px] h-[6px] border-t border-b border-t-[#dcdee0] border-b-white" />
    <div className="flex h-[84px] items-center justify-center gap-[134px]">
      <button type="button" aria-label="Recent apps">
        <svg viewBox="0 0 28 36" className="h-9 w-7" fill="currentColor">
          <rect x="2" y="6" width="24" height="24" rx="1.5" />
        </svg>
      </button>
      <button type="button" aria-label="Home">
        <svg viewBox="0 0 36 36" className="h-9 w-9">
          <circle cx="18" cy="18" r="16" fill="none" stroke="currentColor" strokeWidth="2.4" />
          <circle cx="18" cy="18" r="12.5" fill="currentColor" />
        </svg>
      </button>
      <button type="button" aria-label="Back">
        <svg viewBox="2 0 28 36" className="h-9 w-7 overflow-visible" fill="currentColor">
          <path d="M0 18 21 5.500Q23 4.500 23 7v22q0 2.500-2 1.500Z" />
        </svg>
      </button>
    </div>
  </nav>
);

export default function App() {
  return (
    <div className="relative flex h-screen flex-col overflow-hidden bg-[#f7f3ee] font-['Roboto',sans-serif]">
      <EmojiDefs />
      <Wallpaper />
      <ChatHeader />
      <main className="relative min-h-0 flex-1 overflow-hidden">
        <ul className="flex flex-col pt-[2px] pr-[35px] pl-[34px]">
          {MESSAGES.map((message) => (
            <Bubble key={message.id} message={message} />
          ))}
        </ul>
      </main>
      <Composer />
      <NavigationBar />
    </div>
  );
}
